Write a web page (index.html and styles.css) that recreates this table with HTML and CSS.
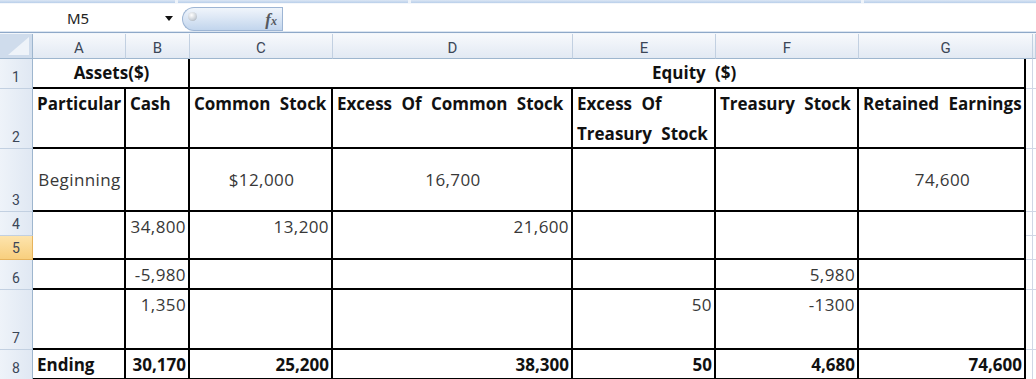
FILE: index.html
```html
<!DOCTYPE html>
<html>
<head>
<meta charset="utf-8">
<link rel="stylesheet" href="styles.css">
</head>
<body>
<div class="ribbon-edge"><span class="seg s1"></span><span class="seg s2"></span><span class="seg s3"></span><span class="seg s4"></span></div>
<div class="formula-bar">
  <div class="name-box"><span class="name">M5</span><span class="caret"></span></div>
  <div class="fx-pill"><span class="knob"></span><span class="fx"><span class="fx-f">f</span><span class="fx-x">x</span></span></div>
  <div class="formula-input"></div>
</div>
<div class="bar-sep"></div>
<div class="sheet">
  <div class="corner"></div>
  <div class="colhead">A</div>
  <div class="colhead">B</div>
  <div class="colhead">C</div>
  <div class="colhead">D</div>
  <div class="colhead">E</div>
  <div class="colhead">F</div>
  <div class="colhead g">G</div>
  <div class="colhead"></div>

  <div class="rowhead">1</div>
  <div class="cell b c r1 ab">Assets($)</div>
  <div class="cell b r1 cg">Equity ($)</div>
  <div class="grid"></div><div class="grid rest"></div>

  <div class="rowhead">2</div>
  <div class="cell b">Particular</div>
  <div class="cell b">Cash</div>
  <div class="cell b">Common Stock</div>
  <div class="cell b">Excess Of Common Stock</div>
  <div class="cell b">Excess Of<br>Treasury Stock</div>
  <div class="cell b">Treasury Stock</div>
  <div class="cell b">Retained Earnings</div>
  <div class="grid"></div><div class="grid rest"></div>

  <div class="rowhead">3</div>
  <div class="cell c mid">Beginning</div>
  <div class="cell mid"></div>
  <div class="cell c mid">$12,000</div>
  <div class="cell c mid">16,700</div>
  <div class="cell mid"></div>
  <div class="cell mid"></div>
  <div class="cell c mid">74,600</div>
  <div class="grid"></div><div class="grid rest"></div>

  <div class="rowhead short">4</div>
  <div class="cell span2"></div>
  <div class="cell r span2">34,800</div>
  <div class="cell r span2">13,200</div>
  <div class="cell r span2">21,600</div>
  <div class="cell span2"></div>
  <div class="cell span2"></div>
  <div class="cell span2"></div>
  <div class="grid"></div><div class="grid rest"></div>

  <div class="rowhead short sel">5</div>
  <div class="grid"></div><div class="grid rest"></div>

  <div class="rowhead">6</div>
  <div class="cell"></div>
  <div class="cell r">-5,980</div>
  <div class="cell"></div>
  <div class="cell"></div>
  <div class="cell"></div>
  <div class="cell r">5,980</div>
  <div class="cell"></div>
  <div class="grid"></div><div class="grid rest"></div>

  <div class="rowhead">7</div>
  <div class="cell"></div>
  <div class="cell r">1,350</div>
  <div class="cell"></div>
  <div class="cell"></div>
  <div class="cell r">50</div>
  <div class="cell r">-1300</div>
  <div class="cell"></div>
  <div class="grid"></div><div class="grid rest"></div>

  <div class="rowhead">8</div>
  <div class="cell b">Ending</div>
  <div class="cell b r">30,170</div>
  <div class="cell b r">25,200</div>
  <div class="cell b r">38,300</div>
  <div class="cell b r">50</div>
  <div class="cell b r">4,680</div>
  <div class="cell b r">74,600</div>
  <div class="grid"></div><div class="grid rest"></div>
</div>
</body>
</html>
```
FILE: styles.css
```css
* { box-sizing: border-box; }
html, body { margin: 0; padding: 0; }
body {
  width: 1036px;
  height: 379px;
  overflow: hidden;
  background: #fff;
  font-family: "Open Sans", "Noto Sans", sans-serif;
}

.ribbon-edge {
  height: 4px;
  display: flex;
  gap: 3px;
  background: #eef3f9;
  border-bottom: 1px solid #f4f7fb;
}
.seg {
  height: 3px;
  background: linear-gradient(#dbe6f4, #b9cfea);
}
.s1 { width: 175px; }
.s2 { width: 230px; }
.s3 { width: 450px; }
.s4 { flex: 1; }

.formula-bar {
  height: 27px;
  display: flex;
  background: #fff;
}
.name-box {
  width: 182px;
  display: flex;
  align-items: center;
  padding-left: 67px;
  padding-right: 9px;
}
.name {
  font-family: "Noto Sans", sans-serif;
  font-size: 15px;
  color: #222;
}
.caret {
  margin-left: auto;
  width: 0;
  height: 0;
  border-top: 5px solid #111;
  border-left: 4px solid transparent;
  border-right: 4px solid transparent;
  margin-top: 1px;
}
.fx-pill {
  width: 100px;
  height: 24px;
  margin-top: 3px;
  border: 1px solid #9db5d4;
  border-right: none;
  border-radius: 12px 0 0 12px;
  background: linear-gradient(#f0f5fb, #dce7f5 45%, #c2d5ed);
  display: flex;
  align-items: center;
  justify-content: space-between;
  padding: 0 5px 0 5px;
}
.knob {
  width: 9px;
  height: 9px;
  border-radius: 50%;
  background: radial-gradient(circle at 40% 35%, #ffffff, #c9cfd6 60%, #8f99a4);
  margin-top: -5px;
}
.fx {
  font-family: "Liberation Serif", serif;
  font-style: italic;
  font-weight: 700;
  color: #55595f;
  font-size: 17px;
  line-height: 1;
}
.fx-x { font-size: 12px; }
.formula-input {
  flex: 1;
  border-left: 1px solid #9db5d4;
  margin-top: 3px;
}

.bar-sep {
  height: 3px;
  background: linear-gradient(#dbe5f1 0 1px, #8ea8c8 1px 2px, #f2f6fb 2px 3px);
}

.sheet {
  display: grid;
  grid-template-columns: 33px 93px 64px 143px 240px 143px 143px 167px 7px 1fr;
  grid-template-rows: 25px 30px 60px 63px 24px 24px 30px 60px 30px;
}

.corner {
  position: relative;
  background: #cfdcec;
  border-right: 1px solid #9eb6ce;
  border-bottom: 1px solid #9eb6ce;
}
.corner::after {
  content: "";
  position: absolute;
  right: 3px;
  bottom: 3px;
  width: 21px;
  height: 18px;
  background: #eef3f9;
  clip-path: polygon(100% 0, 100% 100%, 0 100%);
}

.colhead {
  background: linear-gradient(#f7f9fc, #e2e9f3);
  border-right: 1px solid #c2d0e1;
  border-bottom: 1px solid #9eb6ce;
  display: flex;
  align-items: center;
  justify-content: center;
  padding-top: 3px;
  font-family: Roboto, sans-serif;
  font-size: 15px;
  color: #3b4657;
}
.colhead.g { grid-column: span 2; }

.rowhead {
  background: linear-gradient(to right, #eef3f9, #e0e8f3);
  border-right: 1px solid #9eb6ce;
  border-bottom: 1px solid #c2d0e1;
  display: flex;
  align-items: flex-end;
  justify-content: center;
  font-family: Roboto, sans-serif;
  font-size: 14px;
  line-height: 21px;
  color: #3b4657;
}
.rowhead.short { line-height: 22px; }
.rowhead.sel {
  background: linear-gradient(#fde4ad, #f8cf7e);
  border-bottom-color: #e6b35c;
  border-right-color: #e6b35c;
}

.cell {
  border-right: 2px solid #000;
  border-bottom: 2px solid #000;
  padding: 0 2px 0 4px;
  line-height: 30px;
  font-size: 17px;
  letter-spacing: 0.4px;
  color: #383838;
  white-space: nowrap;
  overflow: hidden;
}
.cell.b { font-weight: 700; color: #111; letter-spacing: 0; word-spacing: 5px; }
.cell.r { text-align: right; }
.cell.c { text-align: center; }
.cell.mid { line-height: 61px; }
.cell.r1 { line-height: 28px; }
.cell.ab { grid-column: span 2; }
.cell.cg { grid-column: span 5; padding-left: 462px; }
.cell.span2 { grid-row: span 2; }

.grid {
  border-right: 1px solid #d0d7e5;
  border-bottom: 1px solid #d0d7e5;
}
.grid.rest { border-right: none; }
```
